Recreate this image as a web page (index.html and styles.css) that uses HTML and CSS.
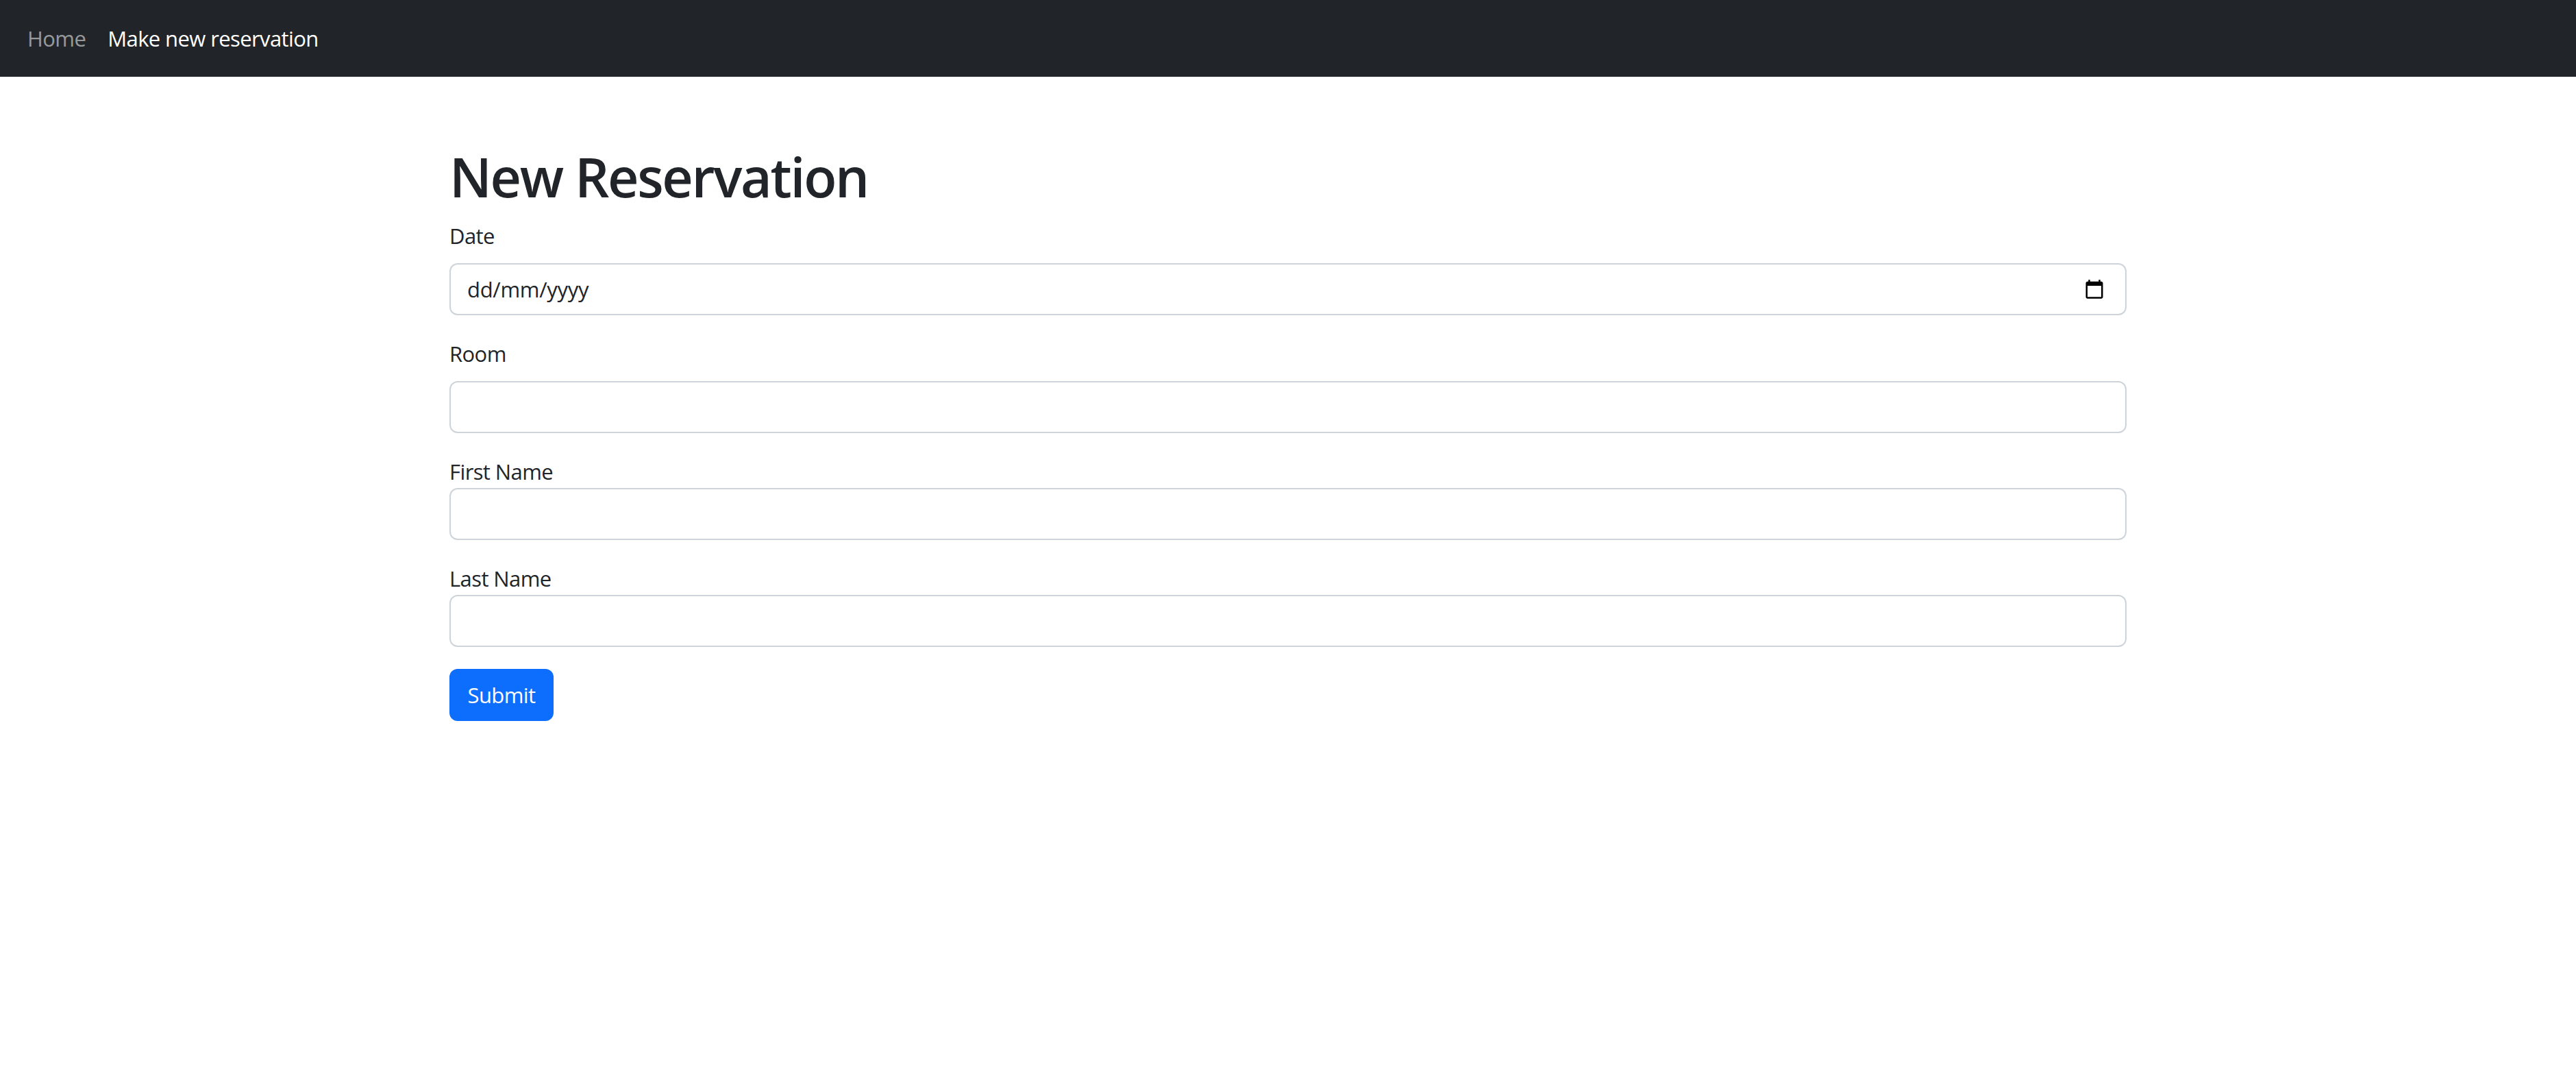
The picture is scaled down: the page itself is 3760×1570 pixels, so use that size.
FILE: index.html
```html
<!DOCTYPE html>
<html lang="en">
<head>
<meta charset="utf-8">
<title>New Reservation</title>
<link rel="stylesheet" href="styles.css">
</head>
<body>
<nav class="navbar">
  <a class="nav-link" href="#">Home</a>
  <a class="nav-link active" href="#">Make new reservation</a>
</nav>
<main class="container">
  <h1 class="title">New Reservation</h1>
  <form>
    <div class="field">
      <label class="label spaced" for="date">Date</label>
      <div class="control date-control">
        <input class="bare" id="date" type="text" value="dd/mm/yyyy">
        <svg class="calendar" viewBox="0 0 24 24" aria-hidden="true"><path d="M20 3h-1V1h-2v2H7V1H5v2H4c-1.1 0-2 .9-2 2v16c0 1.1.9 2 2 2h16c1.1 0 2-.9 2-2V5c0-1.1-.9-2-2-2zm0 18H4V8h16v13z"/></svg>
      </div>
    </div>
    <div class="field">
      <label class="label spaced" for="room">Room</label>
      <input class="control" id="room" type="text">
    </div>
    <div class="field">
      <label class="label" for="first">First Name</label>
      <input class="control" id="first" type="text">
    </div>
    <div class="field">
      <label class="label" for="last">Last Name</label>
      <input class="control" id="last" type="text">
    </div>
    <button class="submit" type="submit">Submit</button>
  </form>
</main>
</body>
</html>
```
FILE: styles.css
```css
* { box-sizing: border-box; }
html, body { margin: 0; background: #fff; }
body {
  font-family: "Open Sans", "Noto Sans", sans-serif;
  font-size: 31px;
  line-height: 48px;
  color: #212529;
  letter-spacing: -0.6px;
}
.navbar {
  display: flex;
  align-items: center;
  height: 112px;
  padding: 0 24px;
  background: #212529;
}
.nav-link {
  padding: 0 16px;
  text-decoration: none;
  color: rgba(255, 255, 255, 0.55);
}
.nav-link.active { color: #fff; }
.container {
  width: 2448px;
  margin: 0 auto;
  padding-top: 96px;
}
.title {
  margin: 0 0 14px;
  padding-top: 2px;
  font-size: 79px;
  line-height: 96px;
  font-weight: 600;
  letter-spacing: -2.35px;
}
.field { margin-bottom: 32px; }
.label { display: block; }
.label.spaced { margin-bottom: 16px; }
.control {
  display: block;
  width: 100%;
  height: 76px;
  padding: 12px 24px;
  border: 2px solid #ced4da;
  border-radius: 12px;
  background: #fff;
  color: inherit;
  font: inherit;
  letter-spacing: inherit;
}
.date-control {
  display: flex;
  align-items: center;
  justify-content: space-between;
  padding-right: 30px;
}
.bare {
  flex: 1;
  min-width: 0;
  padding: 0;
  border: 0;
  outline: 0;
  background: transparent;
  color: inherit;
  font: inherit;
  letter-spacing: -0.3px;
}
.calendar { width: 30px; height: 30px; flex: none; }
.submit {
  display: block;
  width: 152px;
  height: 76px;
  padding: 0;
  border: 0;
  border-radius: 12px;
  background: #0d6efd;
  color: #fff;
  font: inherit;
  letter-spacing: inherit;
}
```
